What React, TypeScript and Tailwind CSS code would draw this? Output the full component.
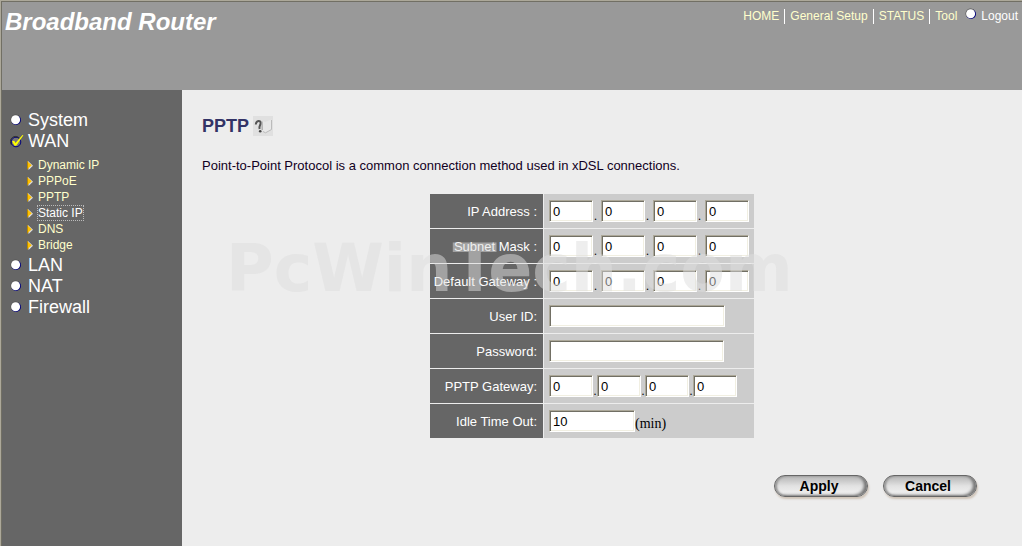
import React from "react";

const subLinks = ["Dynamic IP", "PPPoE", "PPTP", "Static IP", "DNS", "Bridge"];

const inputStyle =
  "h-[22px] bg-white border border-t-[#aca899] border-l-[#aca899] border-r-white border-b-white shadow-[inset_1px_1px_0_#716f64,inset_-1px_-1px_0_#f1efe2] pl-[3px] text-[13px] text-black outline-none";

const Bullet = () => (
  <svg width="12" height="12" viewBox="0 0 12 12" className="shrink-0" aria-hidden="true">
    <circle cx="6" cy="6" r="5" fill="#00007a" />
    <path d="M1.8 9A5 5 0 1 1 9.5 2.2L6 6Z" fill="#555" />
    <circle cx="5.6" cy="5.7" r="4.5" fill="#fff" />
  </svg>
);

const CheckedBullet = () => (
  <svg width="14" height="14" viewBox="0 0 14 14" className="shrink-0 -mr-0.5" aria-hidden="true">
    <circle cx="6" cy="8" r="4.8" fill="#777" stroke="#00007a" strokeWidth="1" />
    <path d="M1.6 11A5 5 0 0 1 9.5 4.2" fill="none" stroke="#333" strokeWidth="1" />
    <path d="M2 7.2L4.2 6.8L5.5 9L12.5 1L13.4 1.2L6.2 11.8L4.6 11.8Z" fill="#ffff00" />
  </svg>
);

const Arrow = () => (
  <svg width="6" height="9" viewBox="0 0 6 9" className="shrink-0" aria-hidden="true">
    <path d="M1 0L6 4.8L1.6 9Z" fill="#ddd" />
    <path d="M0 0L4.8 4.2L0 8.6Z" fill="#ffc000" />
    <path d="M0.5 8.5V0.5" stroke="#a87c00" strokeWidth="0.8" />
  </svg>
);

const HelpIcon = () => (
  <svg width="20" height="20" viewBox="0 0 20 20" aria-hidden="true">
    <rect width="20" height="20" fill="#e0e0e0" />
    <path d="M9 5L9.5 15L12.5 16.8L18.5 13.5V3.5L12 6Z" fill="#e8e8e8" />
    <path d="M10 15.5L12.5 16.8L18.5 13.5V4" fill="none" stroke="#bbb" strokeWidth="1" />
    <path d="M2.8 8.5C3 4.2 8.2 3.6 7.6 7.6C7.3 9.5 5.8 10 6.6 13" fill="none" stroke="#555" strokeWidth="2" />
    <path d="M9 5.5L9.2 14" stroke="#999" strokeWidth="1" />
    <circle cx="7.2" cy="15.2" r="1.3" fill="#444" />
  </svg>
);

const MenuItem = ({ name, checked }: { name: string; checked?: boolean }) => (
  <a href="#" className="flex items-center gap-1.5 h-[21px] text-lg text-white">
    {checked ? <CheckedBullet /> : <Bullet />}
    {name}
  </a>
);

const NavBar = () => <span className="mx-[5px] w-px h-[15px] bg-white" />;

const IpInputs = ({ id, label, tight }: { id: string; label: string; tight?: boolean }) => (
  <div className="flex items-end">
    {[0, 1, 2, 3].map((n) => (
      <React.Fragment key={n}>
        {n > 0 && (
          <span
            className={
              tight
                ? "w-1 text-center font-['Liberation_Serif',serif] text-xs leading-3"
                : "w-2 pl-px font-['Liberation_Serif',serif] text-xs leading-3"
            }
          >
            .
          </span>
        )}
        <input
          id={`${id}-${n}`}
          aria-label={`${label} ${n + 1}`}
          defaultValue="0"
          className={`${inputStyle} w-11`}
        />
      </React.Fragment>
    ))}
  </div>
);

const Row = ({ label, id, children }: { label: string; id: string; children: React.ReactNode }) => (
  <tr className="h-[34px]">
    <th scope="row" className="w-[113px] bg-[#666] pt-0.5 pr-1.5 text-right text-[13px] font-normal whitespace-nowrap text-white">
      <label htmlFor={id}>{label}</label>
    </th>
    <td className="w-[210px] bg-[#ccc] pl-[5px]">{children}</td>
  </tr>
);

const ActionButton = ({ children }: { children: React.ReactNode }) => (
  <button className="w-[94px] h-[22px] pr-1 rounded-full border border-[#666] bg-linear-to-b from-[#b5b5b5] via-[#e2e2e2] to-[#f4f4f4] shadow-[inset_-3px_-1px_3px_#777,inset_2px_0_2px_#999,1px_2px_2px_#cfc4b8] text-sm leading-5 font-bold text-black">
    {children}
  </button>
);

const App = () => {
  return (
    <div className="min-h-screen flex flex-col border-t border-l border-[#aca899] bg-[#ededed] font-['Liberation_Sans',Arial,sans-serif]">
      <header className="flex justify-between items-start h-[89px] border-t border-l border-[#716f64] bg-[#999]">
        <h1 className="pl-[3px] pt-1 text-2xl leading-8 font-bold italic text-white">Broadband Router</h1>
        <nav className="flex items-center pt-1.5 pr-1 text-xs text-[#ffffcc]">
          <a href="#">HOME</a>
          <NavBar />
          <a href="#">General Setup</a>
          <NavBar />
          <a href="#">STATUS</a>
          <NavBar />
          <a href="#">Tool</a>
          <a href="#" className="flex items-start gap-1 ml-2 text-white">
            <Bullet />
            Logout
          </a>
        </nav>
      </header>

      <div className="flex flex-1">
        {/* Side menu */}
        <aside className="w-[181px] shrink-0 border-l border-[#716f64] bg-[#666] pl-2 pt-[19px]">
          <MenuItem name="System" />
          <MenuItem name="WAN" checked />
          <ul className="pl-[17px] pt-1.5 pb-px">
            {subLinks.map((name) => (
              <li key={name} className="flex items-center gap-[5px] h-4 text-xs leading-[14px]">
                <Arrow />
                <a
                  href="#"
                  className={
                    name === "Static IP"
                      ? "text-white outline-1 outline-dotted outline-[#bbb]"
                      : "text-[#ffffcc]"
                  }
                >
                  {name}
                </a>
              </li>
            ))}
          </ul>
          <MenuItem name="LAN" />
          <MenuItem name="NAT" />
          <MenuItem name="Firewall" />
        </aside>

        {/* Content */}
        <main className="flex-1 pl-5 pr-10 pt-[25px]">
          <div className="flex items-center gap-1">
            <h2 className="pt-px text-lg leading-5 font-bold text-[#333366]">PPTP</h2>
            <a href="#" aria-label="Help">
              <HelpIcon />
            </a>
          </div>
          <p className="mt-[22px] text-[13px] leading-4 text-[#110022]">
            Point-to-Point Protocol is a common connection method used in xDSL connections.
          </p>

          <form onSubmit={(e) => e.preventDefault()}>
            <div className="relative mt-[19px] mx-auto w-fit">
              <table className="border-separate border-spacing-px">
                <tbody>
                  <Row label="IP Address :" id="ip-0">
                    <IpInputs id="ip" label="IP Address" />
                  </Row>
                  <Row label="Subnet Mask :" id="mask-0">
                    <IpInputs id="mask" label="Subnet Mask" />
                  </Row>
                  <Row label="Default Gateway :" id="gateway-0">
                    <IpInputs id="gateway" label="Default Gateway" />
                  </Row>
                  <Row label="User ID:" id="user">
                    <input id="user" className={`${inputStyle} block w-44`} />
                  </Row>
                  <Row label="Password:" id="password">
                    <input id="password" type="password" className={`${inputStyle} block w-[175px]`} />
                  </Row>
                  <Row label="PPTP Gateway:" id="pptp-0">
                    <IpInputs id="pptp" label="PPTP Gateway" tight />
                  </Row>
                  <Row label="Idle Time Out:" id="idle">
                    <div className="flex items-end">
                      <input id="idle" defaultValue="10" className={`${inputStyle} w-[86px]`} />
                      <span className="font-['Liberation_Serif',serif] text-sm leading-4">(min)</span>
                    </div>
                  </Row>
                </tbody>
              </table>
              {/* Watermark */}
              <span
                aria-hidden="true"
                className="pointer-events-none absolute left-1/2 top-11 -translate-x-[366px] font-['DejaVu_Sans',sans-serif] text-[65px] leading-[64px] font-bold whitespace-nowrap text-[#dddddd]/50"
              >
                PcWinTech.com
              </span>
            </div>

            <div className="flex justify-end gap-[15px] mt-9 pr-[5px]">
              <ActionButton>Apply</ActionButton>
              <ActionButton>Cancel</ActionButton>
            </div>
          </form>
        </main>
      </div>
    </div>
  );
};

export default App;
